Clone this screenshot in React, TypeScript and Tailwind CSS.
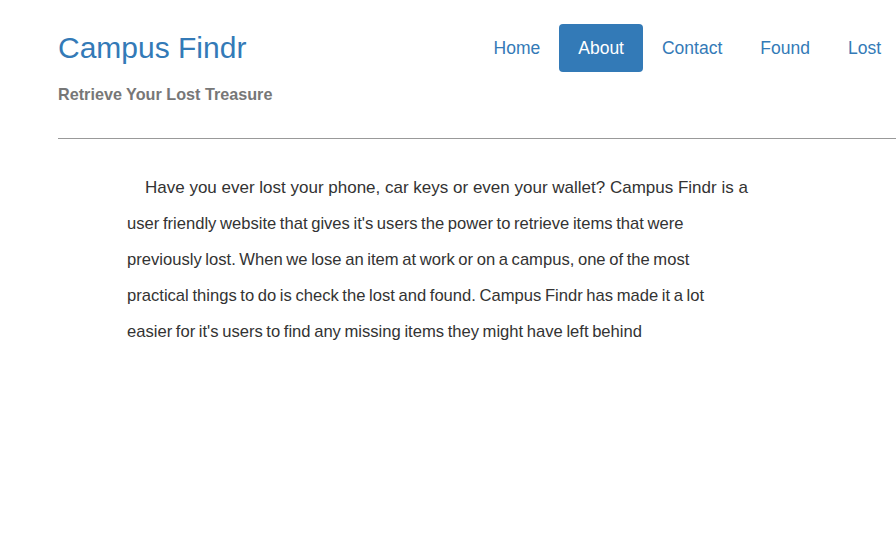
import React from 'react';

const navItems = ['Home', 'About', 'Contact', 'Found', 'Lost'];

const App: React.FC = () => {
  const active = 'About';

  return (
    <div className="w-full min-h-[560px] overflow-hidden bg-white" style={{ fontFamily: '"Liberation Sans", Arial, sans-serif' }}>
      <div className="w-[900px] pl-[58px]">
        <header className="flex items-start pt-[24px]">
          <div className="flex flex-col">
            <h1 className="text-[30px] leading-[48px] text-[#337ab7]">Campus Findr</h1>
            <p className="mt-[11px] text-[16.2px] font-bold leading-[22px] text-[#777]">Retrieve Your Lost Treasure</p>
          </div>
          <nav className="ml-auto flex">
            {navItems.map(item => (
              <a
                key={item}
                href="#"
                className={`h-[48px] px-[19px] flex items-center rounded-[4px] text-[17.5px] ${
                  item === active ? 'bg-[#337ab7] text-white' : 'text-[#337ab7]'
                }`}
              >
                {item}
              </a>
            ))}
          </nav>
        </header>
        <hr className="mt-[33px] border-t border-[#999]" />
        <div className="pl-[69px] pt-[31px]">
          <p className="w-[640px] text-[17px] leading-[36px] text-[#333]">
            <span className="pl-[18px]">Have you ever lost your phone, car keys or even your wallet? Campus Findr is a</span>
            <br />
            <span className="text-[16.6px] [word-spacing:-1px]">
              user friendly website that gives it's users the power to retrieve items that were
              <br />
              previously lost. When we lose an item at work or on a campus, one of the most
              <br />
              practical things to do is check the lost and found. Campus Findr has made it a lot
              <br />
              easier for it's users to find any missing items they might have left behind
            </span>
          </p>
        </div>
      </div>
    </div>
  );
};

export default App;
